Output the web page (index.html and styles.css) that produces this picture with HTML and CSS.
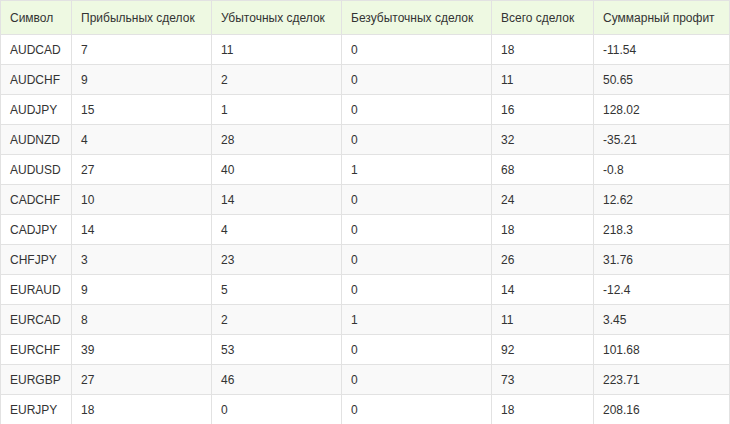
FILE: index.html
```html
<!DOCTYPE html>
<html lang="ru">
<head>
<meta charset="utf-8">
<link rel="stylesheet" href="styles.css">
</head>
<body>
<table class="stats">
<colgroup>
<col class="c1"><col class="c2"><col class="c3"><col class="c4"><col class="c5"><col class="c6">
</colgroup>
<thead>
<tr><th>Символ</th><th>Прибыльных сделок</th><th>Убыточных сделок</th><th>Безубыточных сделок</th><th>Всего сделок</th><th>Суммарный профит</th></tr>
</thead>
<tbody>
<tr><td>AUDCAD</td><td>7</td><td>11</td><td>0</td><td>18</td><td>-11.54</td></tr>
<tr><td>AUDCHF</td><td>9</td><td>2</td><td>0</td><td>11</td><td>50.65</td></tr>
<tr><td>AUDJPY</td><td>15</td><td>1</td><td>0</td><td>16</td><td>128.02</td></tr>
<tr><td>AUDNZD</td><td>4</td><td>28</td><td>0</td><td>32</td><td>-35.21</td></tr>
<tr><td>AUDUSD</td><td>27</td><td>40</td><td>1</td><td>68</td><td>-0.8</td></tr>
<tr><td>CADCHF</td><td>10</td><td>14</td><td>0</td><td>24</td><td>12.62</td></tr>
<tr><td>CADJPY</td><td>14</td><td>4</td><td>0</td><td>18</td><td>218.3</td></tr>
<tr><td>CHFJPY</td><td>3</td><td>23</td><td>0</td><td>26</td><td>31.76</td></tr>
<tr><td>EURAUD</td><td>9</td><td>5</td><td>0</td><td>14</td><td>-12.4</td></tr>
<tr><td>EURCAD</td><td>8</td><td>2</td><td>1</td><td>11</td><td>3.45</td></tr>
<tr><td>EURCHF</td><td>39</td><td>53</td><td>0</td><td>92</td><td>101.68</td></tr>
<tr><td>EURGBP</td><td>27</td><td>46</td><td>0</td><td>73</td><td>223.71</td></tr>
<tr><td>EURJPY</td><td>18</td><td>0</td><td>0</td><td>18</td><td>208.16</td></tr>
</tbody>
</table>
</body>
</html>
```
FILE: styles.css
```css
html, body {
  margin: 0;
  padding: 0;
  background: #ffffff;
}
body {
  font-family: "Liberation Sans", Arial, sans-serif;
  font-size: 12px;
  color: #333333;
}
.stats {
  border-collapse: collapse;
  table-layout: fixed;
  width: 729px;
}
.c1 { width: 71px; }
.c2 { width: 140px; }
.c3 { width: 130px; }
.c4 { width: 150px; }
.c5 { width: 102px; }
.c6 { width: 136px; }
.stats th,
.stats td {
  border: 1px solid #e2e2e2;
  text-align: left;
  font-weight: normal;
  padding: 0 9px;
  white-space: nowrap;
  overflow: hidden;
}
.stats th {
  background: #eef9e2;
  height: 33px;
}
.stats td {
  height: 29px;
}
.stats tbody tr:nth-child(even) td {
  background: #f9f9f9;
}
```
